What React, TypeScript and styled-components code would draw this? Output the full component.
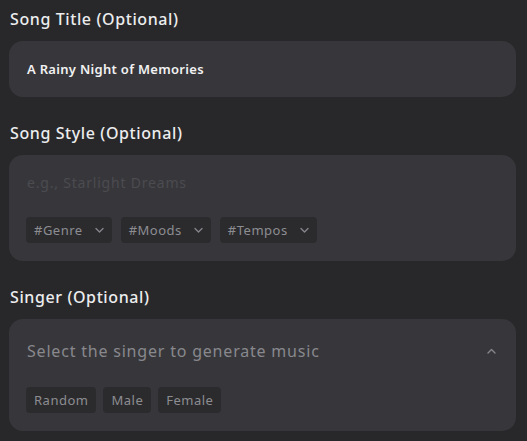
import React from "react";
import styled, { createGlobalStyle } from "styled-components";

const Global = createGlobalStyle`
  html, body { margin: 0; padding: 0; background: #28282b; }
  body { font-family: "Noto Sans", "Open Sans", sans-serif; }
`;

const Page = styled.div`
  display: flex;
  flex-direction: column;
  gap: 26px;
  padding: 9px 11px 0 9px;
  width: 527px;
  box-sizing: border-box;
`;

const Section = styled.section`
  display: flex;
  flex-direction: column;
  gap: 12px;
`;

const Label = styled.div`
  color: #ededee;
  font-size: 16px;
  font-weight: 500;
  line-height: 20px;
  letter-spacing: 0.6px;
  padding-left: 1px;
`;

const Box = styled.div<{ $h: number; $pt: number }>`
  background: #37373b;
  border-radius: 14px;
  height: ${(p) => p.$h}px;
  box-sizing: border-box;
  padding: ${(p) => p.$pt}px 18px 0 17px;
  display: flex;
  flex-direction: column;
  position: relative;
`;

const Value = styled.div`
  color: #f2f2f2;
  font-size: 13px;
  font-weight: 600;
  line-height: 20px;
  letter-spacing: 0.3px;
  padding-left: 1px;
`;

const Placeholder = styled.div<{ $size: number; $color: string }>`
  color: ${(p) => p.$color};
  font-size: ${(p) => p.$size}px;
  line-height: 22px;
  letter-spacing: 0.8px;
  padding-left: 1px;
  display: flex;
  justify-content: space-between;
  align-items: center;
`;

const Tags = styled.div<{ $mt: number; $gap: number }>`
  display: flex;
  gap: ${(p) => p.$gap}px;
  margin-top: ${(p) => p.$mt}px;
`;

const Tag = styled.div`
  background: #2b2b2e;
  border-radius: 4px;
  height: 26px;
  padding: 0 8px;
  display: flex;
  align-items: center;
  gap: 12px;
  color: #8d8d91;
  font-size: 13px;
  letter-spacing: 0.5px;
`;

const Chevron = ({ up }: { up?: boolean }) => (
  <svg width="9" height="6" viewBox="0 0 9 6" fill="none">
    <path
      d={up ? "M1 5 L4.5 1.5 L8 5" : "M1 1.5 L4.5 5 L8 1.5"}
      stroke="#85858a"
      strokeWidth="1.4"
      strokeLinecap="round"
      strokeLinejoin="round"
    />
  </svg>
);

const UpIcon = styled.span`
  margin-right: 2px;
  display: flex;
`;

export default function App() {
  return (
    <>
      <Global />
      <Page>
        <Section>
          <Label>Song Title (Optional)</Label>
          <Box $h={56} $pt={18}>
            <Value>A Rainy Night of Memories</Value>
          </Box>
        </Section>
        <Section>
          <Label>Song Style (Optional)</Label>
          <Box $h={106} $pt={17}>
            <Placeholder $size={14} $color="#4b4b50">e.g., Starlight Dreams</Placeholder>
            <Tags $mt={23} $gap={9}>
              <Tag>#Genre <Chevron /></Tag>
              <Tag>#Moods <Chevron /></Tag>
              <Tag>#Tempos <Chevron /></Tag>
            </Tags>
          </Box>
        </Section>
        <Section>
          <Label>Singer (Optional)</Label>
          <Box $h={112} $pt={21}>
            <Placeholder $size={16} $color="#88888d">
              Select the singer to generate music
              <UpIcon><Chevron up /></UpIcon>
            </Placeholder>
            <Tags $mt={25} $gap={7}>
              <Tag>Random</Tag>
              <Tag>Male</Tag>
              <Tag>Female</Tag>
            </Tags>
          </Box>
        </Section>
      </Page>
    </>
  );
}
